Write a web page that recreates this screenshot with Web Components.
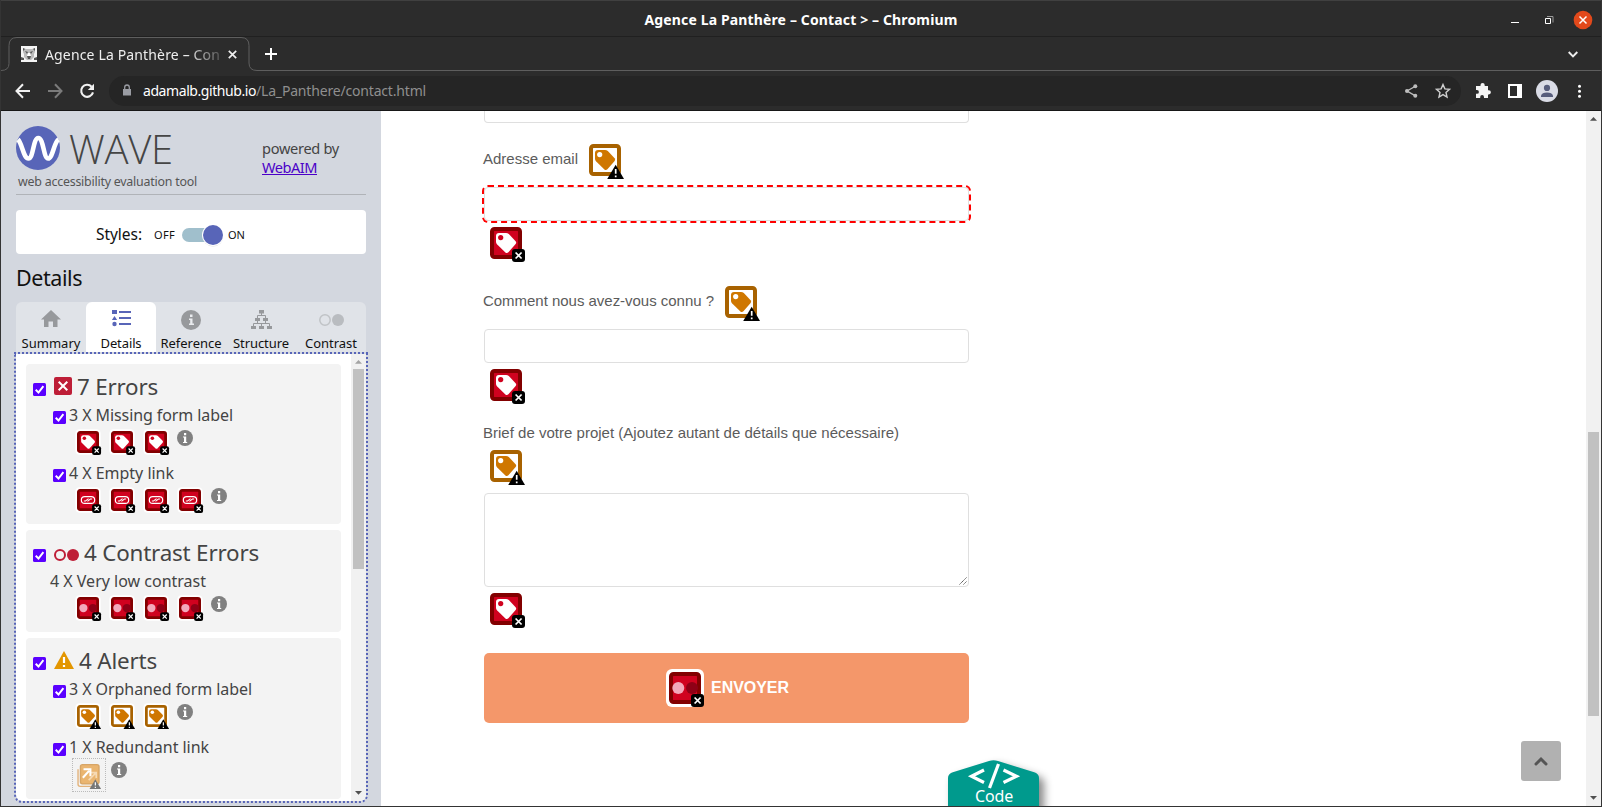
<!DOCTYPE html>
<html lang="fr">
<head>
<meta charset="utf-8">
<title>Agence La Panthère – Contact</title>
<style>
html,body{margin:0;height:100%;overflow:hidden;background:#2c2c2c}
body{font-family:"Noto Sans","Open Sans",sans-serif}
</style>
</head>
<body>
<browser-window></browser-window>
<script>
function define(name, html, setup) {
  customElements.define(name, class extends HTMLElement {
    constructor() { super(); this.attachShadow({ mode: 'open' }); }
    connectedCallback() {
      this.shadowRoot.innerHTML = typeof html === 'function' ? html(this) : html;
      if (setup) setup(this);
    }
  });
}

/* Text that adapts its tracking to the width given in "w". */
define('fit-text', '<style>:host{display:inline-block;white-space:nowrap;flex:none}span{display:inline-block}:host([under]) span{text-decoration:underline}</style><span><slot></slot></span>', el => {
  const w = +el.getAttribute('w');
  const n = el.textContent.length;
  const now = el.shadowRoot.querySelector('span').getBoundingClientRect().width;
  if (w && now) { el.style.letterSpacing = ((w - now) / n).toFixed(3) + 'px'; el.style.width = w + 'px'; }
});

/* ---------- small glyphs ---------- */
const TAG = 'M6 9Q6 6 9 6H16Q17.6 6 18.8 7.1L25.6 14.2Q26.8 15.6 25.6 17L18.4 25.2Q17 26.6 15.4 25.4L7.2 17.6Q6 16.4 6 15Z';
const ERR = '<rect x="22" y="22" width="13" height="13" rx="3"/><path d="M25.6 25.5l6 6m0-6l-6 6" stroke="#fff" stroke-width="1.7"/>';
const WARN = '<path d="M26.7 20.800L35 35H18.200z"/><path d="M26.700 25v4.800M26.700 31.600v1.700" stroke="#fff" stroke-width="1.700"/>';
const sq = (edge, fill) => `<rect x="2" y="2" width="28" height="28" rx="2.5" fill="${fill}" stroke="${edge}" stroke-width="4"/>`;
const MARKS = {
  label: sq('#820000', '#d0021f') + `<path d="${TAG}" fill="#fff"/><circle cx="10.7" cy="10.6" r="2.6" fill="#d0021f"/>` + ERR,
  link: sq('#820000', '#d0021f') + '<rect x="6.300" y="11" width="19.400" height="10" rx="5" fill="none" stroke="#fff" stroke-width="1.700"/><path d="M10 17.300h2.500l4.300-3.200M15.200 17.900l4.300-3.200H22" fill="none" stroke="#fff" stroke-width="1.500"/>' + ERR,
  contrast: sq('#820000', '#d0021f') + '<circle cx="9.3" cy="16" r="6" fill="#f3a9bb"/><circle cx="23" cy="16" r="6" fill="#8e0016"/>' + ERR,
  orphan: sq('#a86200', '#fff') + `<path d="${TAG}" fill="#cf7700"/><circle cx="10.7" cy="10.6" r="2.6" fill="#fff"/>` + WARN,
  redundant: '<path d="M1.500 6v22q0 3 3 3H27" fill="none" stroke="#e2b27a" stroke-width="2"/><rect x="5" y="-.5" width="27" height="28" rx="3" fill="#eab570" stroke="#d7a566" stroke-width="2"/><path d="M17 22l10-10M20 11h8v8" fill="none" stroke="#f6dab5" stroke-width="2.400"/><path d="M8.500 18.500L17.500 8.500M9.500 6.300h10v10" fill="none" stroke="#fff" stroke-width="3"/><path d="M26.700 20.800L35 35H18.200z" fill="#777"/><path d="M26.700 25v4.800M26.700 31.600v1.700" stroke="#fff" stroke-width="1.700"/>'
};
define('wave-mark', el => {
  const small = el.hasAttribute('small'), halo = small ? 2.4 : 3;
  const bg = small || el.hasAttribute('halo') ? `<rect x="${-halo}" y="${-halo}" width="${32 + 2 * halo}" height="${32 + 2 * halo}" rx="6" fill="#fff"/>` : '';
  return `<style>:host{display:block;flex:none;width:${small ? 22 : 32}px;height:${small ? 22 : 32}px}svg{display:block;width:100%;height:100%;overflow:visible}</style><svg viewBox="0 0 32 32">${el.getAttribute('type') === 'redundant' ? '' : bg}${MARKS[el.getAttribute('type')]}</svg>`;
});
define('wave-check', '<style>:host{display:block;flex:none;width:13px;height:13px}svg{display:block}</style><svg width="13" height="13"><rect width="13" height="13" rx="1.500" fill="#5a00ff"/><path d="M2.700 6.800l2.800 2.700 4.900-6.300" fill="none" stroke="#fff" stroke-width="2"/></svg>');
define('wave-info', '<style>:host{display:block;flex:none;width:16px;height:16px}svg{display:block}</style><svg width="16" height="16"><circle cx="8" cy="8" r="8" fill="#808080"/><path d="M7 3h2.200v2.200H7zM6 6.500h3.200V12H10.200v1H6v-1h1V7.500H6z" fill="#fff"/></svg>');

/* ---------- title bar, tab and toolbar ---------- */
define('title-bar', `<style>
:host{display:grid;grid-template-columns:1fr auto 1fr;align-items:center;height:37px;box-sizing:border-box;border-top:1px solid #404040;border-bottom:1px solid #202020;color:#fff;font-size:14px;font-weight:700;line-height:36px}
svg{display:block;justify-self:end}fit-text{margin-top:1px}</style>
<i></i><fit-text w="313">Agence La Panthère – Contact &gt; – Chromium</fit-text>
<svg width="100" height="36"><path d="M10 20.500h8" stroke="#fff"/><path d="M44.500 16.500h5v5h-5z" fill="none" stroke="#fff"/><path d="M46 14.500h6v6" fill="none" stroke="#999"/><circle cx="82" cy="18" r="9.300" fill="#e2491b"/><path d="M78.500 14.500l7 7m0-7l-7 7" stroke="#fff" stroke-width="1.500"/></svg>`);
define('tab-strip', `<style>
:host{display:flex;height:35px;color:#eee;font-size:14px;position:relative}
.edge{position:absolute;left:0;top:0}
.tab{display:flex;align-items:center;width:247px;box-sizing:border-box;padding:0 0 0 20px;height:34px}
.name{margin-left:8px;width:176px;-webkit-mask-image:linear-gradient(90deg,#000 80%,#0003)}
svg{display:block;flex:none}.x{margin-left:7px}.plus{margin:11px 0 0 17px}.down{margin:14px 23px 0 auto}</style>
<svg class="edge" width="1600" height="35"><path d="M0 33.500q8 0 8-7V8.500q0-8 8-8H240q8 0 8 8V26q0 7.500 8 7.500H1600" fill="none" stroke="#5e5e5e"/></svg>
<div class="tab"><svg width="16" height="16"><path fill="#f4f4f4" d="M0 0h16v16H0z"/><path d="M2 2l3 1h6l3-1v4l-1 2v3l-3 3H6l-3-3V8L2 6z" fill="#bbb"/><path d="M4 5l3 1-1 2zm8 0L9 6l1 2zM6 10h4l-1 3H7zM0 11l3 1v2H0zm16 0l-3 1v2h3zM2 2l2 1-2 2zm12 0l-2 1 2 2z" fill="#555"/><path d="M7 7h2l1 3H6z" fill="#fff"/></svg>
<div class="name"><fit-text w="175">Agence La Panthère – Con</fit-text></div>
<svg class="x" width="9" height="9"><path d="M.8.800l7.400 7.400m0-7.400L.8 8.200" stroke="#eee" stroke-width="1.700"/></svg></div>
<svg class="plus" width="12" height="12"><path d="M6 0v12M0 6h12" stroke="#fff" stroke-width="2"/></svg>
<svg class="down" width="10" height="8"><path d="M.700 1l4.300 4.300L9.300 1" fill="none" stroke="#eee" stroke-width="1.900"/></svg>`);
define('tool-bar', `<style>
:host{display:flex;align-items:center;height:38px;padding-left:6px;border-bottom:1px solid #171717}
svg{display:block;flex:none}
.url{display:flex;align-items:center;width:1352px;height:30px;box-sizing:border-box;border-radius:15px;background:#252525;margin:0 6px 0 6px;padding:0 2px 0 13px;color:#8f8f8f;font-size:14px}
.url fit-text{margin-top:-2px}.url b{font-weight:400;color:#fff}.lock{margin:-2px 11px 0 0}.share{margin-left:auto}</style>
<svg width="32" height="32"><path d="M23 16H10M16 9.300L9.500 16l6.500 6.700" fill="none" stroke="#f2f2f2" stroke-width="2"/></svg>
<svg width="32" height="32"><path d="M9 16h13M16 9.300l6.500 6.700-6.500 6.700" fill="none" stroke="#7b7b7b" stroke-width="2"/></svg>
<svg width="32" height="32"><path d="M20.600 11.700A6 6 0 1 0 22 17.400" fill="none" stroke="#f2f2f2" stroke-width="2.100"/><path d="M23 8.800V15h-6.200z" fill="#f2f2f2"/></svg>
<div class="url"><svg class="lock" width="10" height="12"><path d="M1 5h8v6.500H1z" fill="#9a9ca3"/><path d="M2.700 6V3.300a2.300 2.300 0 0 1 4.600 0V6" fill="none" stroke="#9a9ca3" stroke-width="1.300"/></svg>
<fit-text w="113"><b>adamalb.github.io</b></fit-text><fit-text w="170">/La_Panthere/contact.html</fit-text>
<svg class="share" width="32" height="32"><path d="M20 11.500L12 16l8 4.700" fill="none" stroke="#bdbdbd" stroke-width="1.400"/><g fill="#bdbdbd"><circle cx="20.300" cy="11.300" r="2"/><circle cx="12" cy="16" r="2"/><circle cx="20.300" cy="20.800" r="2"/></g></svg>
<svg width="32" height="32"><path d="M16 9.600l1.900 4.300 4.600.4-3.500 3.100 1 4.600-4-2.400-4 2.400 1-4.600-3.500-3.100 4.600-.4z" fill="none" stroke="#cfcfcf" stroke-width="1.400"/></svg></div>
<svg width="32" height="32"><path d="M9 11h4.500V10a2 2 0 0 1 4.200 0v1H21v4.200h.8a2 2 0 0 1 0 4.200H21V23h-4v-1a1.900 1.900 0 0 0-3.800 0v1H9v-4.200h1a1.900 1.900 0 0 0 0-3.800H9z" fill="#f5f5f5"/></svg>
<svg width="32" height="32"><path d="M9 9h14v14H9z" fill="#fff"/><path d="M11 11h7v10h-7z" fill="#2c2c2c"/></svg>
<svg width="32" height="32"><circle cx="16" cy="16" r="11" fill="#dadce6"/><circle cx="16" cy="12.900" r="3.100" fill="#575d7c"/><path d="M10 22v-1.500q1-3 6-3t6 3V22z" fill="#575d7c"/></svg>
<svg width="32" height="32"><g fill="#fff"><circle cx="16.500" cy="11.300" r="1.500"/><circle cx="16.500" cy="16.300" r="1.500"/><circle cx="16.500" cy="21.300" r="1.500"/></g></svg>`);

/* ---------- WAVE sidebar ---------- */
define('wave-brand', `<style>
:host{display:flex;flex-direction:column;width:350px;height:84px;box-sizing:border-box;border-bottom:1px solid #b0b3b8;padding-top:15px;color:#454545}
.row{display:flex;height:44px}svg{flex:none}.w{font:300 40px/44px "Open Sans","Noto Sans",sans-serif;margin:1px 0 0 9px}
.by{margin:13px 0 0 89px;font-size:14.600px;line-height:19px;display:flex;flex-direction:column;color:#444}
.by a{color:#4b00c8}.sub{font-size:12.400px;line-height:18px;margin:3px 0 0 2px;color:#555}</style>
<div class="row"><svg width="44" height="44"><circle cx="22" cy="22" r="22" fill="#5865b8"/><path d="M2 13.500C6 17 7.500 32.500 12.500 32.500S17 12 22.300 12s5.200 20.500 9.800 20.500S38 16 42.500 13.500" fill="none" stroke="#fff" stroke-width="4.600"/></svg>
<fit-text class="w" w="104">WAVE</fit-text>
<div class="by"><fit-text w="77">powered by</fit-text><a><fit-text under w="55">WebAIM</fit-text></a></div></div>
<div class="sub"><fit-text w="179">web accessibility evaluation tool</fit-text></div>`);
define('styles-switch', `<style>
:host{display:flex;align-items:center;width:350px;height:44px;box-sizing:border-box;background:#fff;border-radius:4px;margin-top:15px;padding:5px 0 0 80px;color:#111;font-size:15.500px}
.s{font-size:11px;margin-top:-1px}svg{display:block;margin:0 4px 0 7px;overflow:visible}</style>
<fit-text w="46" style="margin:-2px 12px 0 0">Styles:</fit-text><fit-text class="s" w="21">OFF</fit-text>
<svg width="43" height="22"><rect y="4" width="36" height="14" rx="7" fill="#a0bfcc"/><circle cx="31" cy="12" r="10.500" fill="#0002"/><circle cx="31" cy="11" r="11" fill="#fff"/><circle cx="31" cy="11" r="10" fill="#5865b8"/></svg>
<fit-text class="s" w="17" style="margin-left:-1px">ON</fit-text>`);
define('wave-tab', el => `<style>
:host{display:flex;flex-direction:column;align-items:center;width:70px;height:50px;color:#111;font-size:13px;line-height:18px;border-radius:6px 6px 0 0}
:host([active]){background:#fff}::slotted(svg){display:block;height:32px;width:70px}</style><slot name="icon"></slot><fit-text w="${el.getAttribute('w')}">${el.getAttribute('label')}</fit-text>`);
define('wave-tabs', `<style>:host{display:flex;width:350px;height:50px;background:#e0e3e8;border-radius:6px 6px 0 0}</style>
<wave-tab label="Summary" w="59"><svg slot="icon" viewBox="0 0 70 32"><path d="M35 8l10 9.500h-3.500V25H37v-5.500h-4.500V25H28v-7.500h-3z" fill="#97999c"/></svg></wave-tab>
<wave-tab active label="Details" w="41"><svg slot="icon" viewBox="0 0 70 32"><path d="M26 8h5v4h-5zM28.500 14l2.600 4h-5.200zM33 9h12v2H33zM33 15h12v2H33zM33 21h12v2H33z" fill="#5865b8"/><circle cx="28.500" cy="22" r="2.200" fill="#5865b8"/></svg></wave-tab>
<wave-tab label="Reference" w="61"><svg slot="icon" viewBox="0 0 70 32"><circle cx="35" cy="18" r="10" fill="#97999c"/><path d="M34 12.500h2.500V15H34zM33 16.500h3.500v5H38V23h-5v-1.500h1.200V18H33z" fill="#e9ebee"/></svg></wave-tab>
<wave-tab label="Structure" w="56"><svg slot="icon" viewBox="0 0 70 32"><path d="M33 8h5v3.500h-5zM29 16h5v3h-5zM37 16h5v3h-5zM25 24h5v3h-5zM33 24h5v3h-5zM41 24h5v3h-5z" fill="#97999c"/><path d="M35.500 11v2.500M31.500 16v-2.500h8V16M31.500 19v2.500M39.500 19v2.500M27.500 24v-2.500h16V24M35.500 21.500V24" fill="none" stroke="#97999c"/></svg></wave-tab>
<wave-tab label="Contrast" w="52"><svg slot="icon" viewBox="0 0 70 32"><circle cx="29" cy="18" r="5.200" fill="none" stroke="#c0c3c6" stroke-width="1.500"/><circle cx="42" cy="18" r="6" fill="#b9bcc0"/></svg></wave-tab>`);

/* One kind of finding: a title line and its row of marks. */
define('wave-item', el => {
  const type = el.getAttribute('type'), n = +el.getAttribute('count'), plain = el.hasAttribute('plain');
  const marks = type === 'redundant'
    ? '<div class="box"><wave-mark small type="redundant"></wave-mark></div>'
    : `<wave-mark small type="${type}"></wave-mark>`.repeat(n);
  return `<style>
:host{display:block;height:58px;color:#444;font-size:16px}
.head{display:flex;height:25px;line-height:23px;padding-left:${plain ? 24 : 27}px}
wave-check{margin:7px 3px 0 0}.marks{display:flex;gap:12px;padding:2px 0 0 51px}wave-info{margin:-1px 0 0 -2px}
.box{width:32px;height:32px;border:1px dotted #bbb;margin:-5px 0 0 -5px;display:flex;justify-content:center;align-items:center}
.box wave-mark{margin:2px 0 0 -2px}
.box+wave-info{margin-left:-7px}</style>
<div class="head">${plain ? '' : '<wave-check></wave-check>'}<fit-text w="${el.getAttribute('w')}">${n} X ${el.getAttribute('label')}</fit-text></div>
<div class="marks">${marks}<wave-info></wave-info></div>`;
});
define('wave-group', el => `<style>
:host{display:block;width:315px;box-sizing:border-box;background:#f3f3f3;border-radius:4px;padding-bottom:4px;color:#444}
.head{display:flex;height:40px;padding-left:7px;font-size:22.400px;line-height:46px}
wave-check{margin:19px 8px 0 0}::slotted(svg){display:block;flex:none;margin:13px 5px 0 0}</style>
<div class="head"><wave-check></wave-check><slot name="icon"></slot><fit-text w="${el.getAttribute('w')}">${el.getAttribute('label')}</fit-text></div><slot></slot>`);
define('wave-panel', `<style>
:host{display:flex;margin-left:-2px;width:354px;height:451px;box-sizing:border-box;border:2px dotted #5865b8;border-radius:0 0 8px 8px;background:#fff;background-clip:padding-box;overflow:hidden}
.list{display:flex;flex-direction:column;gap:6px;width:335px;padding:10px 0 0 10px;box-sizing:border-box}
wave-group:last-child{height:161px}</style>
<div class="list">
<wave-group label="7 Errors" w="81"><svg slot="icon" width="18" height="18"><rect width="18" height="18" rx="2" fill="#be1e37"/><path d="M4.700 4.700l8.600 8.600m0-8.600l-8.600 8.600" stroke="#fff" stroke-width="2"/></svg>
<wave-item type="label" count="3" label="Missing form label" w="164"></wave-item><wave-item type="link" count="4" label="Empty link" w="105"></wave-item></wave-group>
<wave-group label="4 Contrast Errors" w="175"><svg slot="icon" width="25" height="18" style="margin-top:16px"><circle cx="6" cy="9" r="5" fill="none" stroke="#be1e37" stroke-width="2"/><circle cx="19" cy="9" r="6" fill="#be1e37"/></svg>
<wave-item plain type="contrast" count="4" label="Very low contrast" w="156"></wave-item></wave-group>
<wave-group label="4 Alerts" w="78"><svg slot="icon" width="20" height="18"><path d="M10 0l10 18H0z" fill="#e39600"/><path d="M10 6v6M10 14v2" stroke="#fff" stroke-width="2.200"/></svg>
<wave-item type="orphan" count="3" label="Orphaned form label" w="183"></wave-item><wave-item type="redundant" count="1" label="Redundant link" w="140"></wave-item></wave-group>
</div><scroll-rail top="15" thumb="200" dim></scroll-rail>`);
define('scroll-rail', el => `<style>
:host{display:flex;flex-direction:column;width:15px;flex:none;height:100%;background:#f1f1f1;position:relative}
svg{display:block;flex:none}.t{width:11px;height:${el.getAttribute('thumb')}px;margin:${el.getAttribute('top') - 15}px 2px 0;background:#c1c1c1}.d{margin-top:auto}</style>
<svg width="15" height="15"><path d="M4 9.800L7.500 6 11 9.800z" fill="${el.hasAttribute('dim') ? '#a3a3a3' : '#505050'}"/></svg><div class="t"></div>
<svg class="d" width="15" height="15"><path d="M4 5h7L7.500 8.700z" fill="#505050"/></svg>`);
define('wave-sidebar', `<style>
:host{display:block;width:380px;box-sizing:border-box;padding-left:15px;background:#d3d7df}
h2{margin:0;font-size:21.500px;line-height:30px;height:30px;padding:9px 0 9px 0;font-weight:400;color:#111}</style>
<wave-brand></wave-brand><styles-switch></styles-switch><h2><fit-text w="66">Details</fit-text></h2><wave-tabs></wave-tabs><wave-panel></wave-panel>`);

/* ---------- contact form ---------- */
define('form-field', el => {
  const area = el.hasAttribute('area');
  return `<style>
:host{display:block;color:#5b5b5b;font:15px/20px "Liberation Sans",Arial,sans-serif}
.label{display:flex;flex-wrap:wrap;align-content:flex-start;align-items:flex-start;height:${area ? 65 : 42}px;width:485px}
.label wave-mark{margin:${area ? '7px 0 0 6px' : '-1px 0 0 11px'}}
.box{height:${area ? 94 : 34}px;box-sizing:border-box;border:1px solid #dfdfdf;border-radius:4px;background:#fff;display:flex;justify-content:flex-end;align-items:flex-end}
:host([wrong]) .box{outline:2px dashed #f00}.err{margin:6px 0 0 6px}.cap{margin:${area ? -5 : 4}px 0 0 -1px;width:${area ? '480px' : 'auto'}}</style>
<div class="label"><div class="cap"><fit-text w="${el.getAttribute('w')}">${el.getAttribute('label')}</fit-text></div><wave-mark type="orphan"></wave-mark></div>
<div class="box">${area ? '<svg width="9" height="9"><path d="M.500 7.500l7-7M4.500 7.500l3-3" stroke="#555" stroke-dasharray="1.400 .4"/></svg>' : ''}</div><wave-mark class="err" type="label"></wave-mark>`;
});
define('send-button', `<style>
:host{display:flex;align-items:center;height:70px;box-sizing:border-box;padding-left:185px;gap:10px;border-radius:5px;background:#f4976a;color:#fff;font:700 16px/20px "Liberation Sans",Arial,sans-serif}
span{margin-top:-1px}</style><wave-mark halo type="contrast"></wave-mark><span><fit-text w="78">ENVOYER</fit-text></span>`);
define('code-badge', `<style>
:host{position:absolute;left:567px;bottom:0;width:91px;height:46px;color:#fff;font-size:16px;line-height:20px}
svg{position:absolute;left:0;top:0;overflow:visible}.t{position:absolute;left:27px;top:26px}.g{filter:drop-shadow(5px 5px 4px #0007)}</style>
<svg width="91" height="46"><path class="g" d="M0 62V18Q0 14 4 12.500L41 1Q45.500-.5 50 1L87 12.500Q91 14 91 18V62z" fill="#009a8d"/><path d="M36 10L23.500 16.300l12.500 6.200M55.500 10L68.500 16.300l-13 6.200M50.500 4L41.500 28" fill="none" stroke="#fff" stroke-width="3.200"/></svg>
<div class="t"><fit-text w="38">Code</fit-text></div>`);
define('contact-page', `<style>
:host{display:flex;flex:1;background:#fff;position:relative;overflow:hidden}
form{width:485px;padding-left:103px;flex:1}
.inner{width:485px}.stub{height:12px;box-sizing:border-box;border:1px solid #dfdfdf;border-top:0;border-radius:0 0 4px 4px}
.top{position:absolute;right:40px;bottom:25px;width:40px;height:40px;border-radius:3px;background:#b1b1b1}
.top svg{display:block}form-field.a{margin-top:22px}form-field.b{margin-top:28px}form-field.c{margin-top:27px}send-button{margin-top:28px}</style>
<form><div class="inner"><div class="stub"></div>
<form-field class="a" wrong label="Adresse email" w="95"></form-field>
<form-field class="b" label="Comment nous avez-vous connu ?" w="231"></form-field>
<form-field class="c" area label="Brief de votre projet (Ajoutez autant de détails que nécessaire)" w="416"></form-field>
<send-button></send-button></div></form>
<scroll-rail top="321" thumb="284"></scroll-rail>
<code-badge></code-badge>
<div class="top"><svg width="40" height="40"><path d="M15 23l5-5 5 5" fill="none" stroke="#555" stroke-width="3" stroke-linecap="round"/></svg></div>`);

define('browser-window', `<style>
:host{display:flex;flex-direction:column;width:1602px;height:807px;box-sizing:border-box;border:1px solid #343434;border-top:0;background:#2c2c2c}
.body{display:flex;flex:1;min-height:0}</style>
<title-bar></title-bar><tab-strip></tab-strip><tool-bar></tool-bar><div class="body"><wave-sidebar></wave-sidebar><contact-page></contact-page></div>`);
</script>
</body>
</html>
